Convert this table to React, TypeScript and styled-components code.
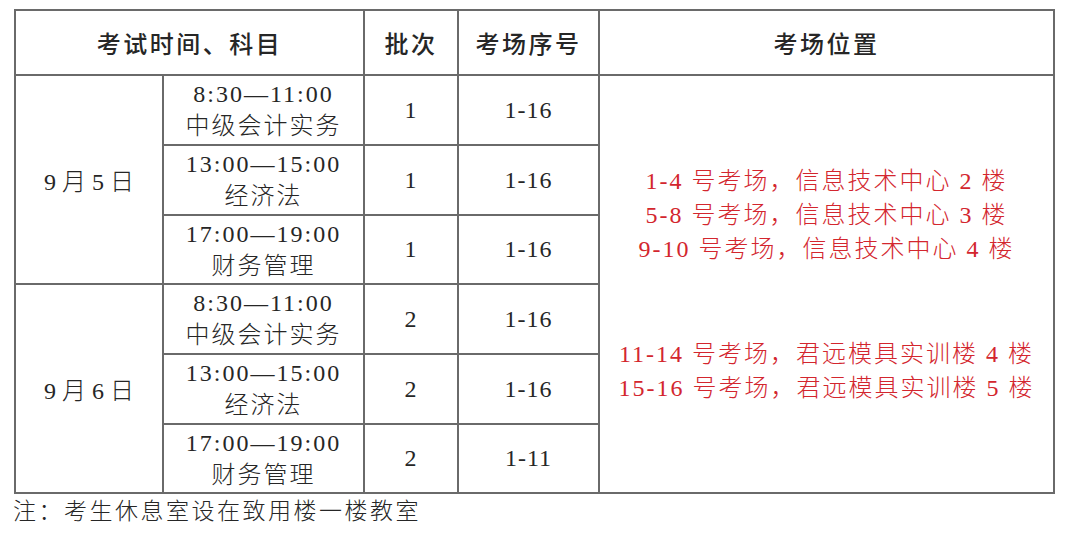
import React from 'react';
import styled, { createGlobalStyle } from 'styled-components';

const GlobalStyle = createGlobalStyle`
  html, body {
    margin: 0;
    padding: 0;
    background: #ffffff;
  }
`;

const Page = styled.div`
  padding: 9px 0 0 14px;
  font-family: "Liberation Serif", "Noto Sans CJK SC", serif;
  color: #262626;
`;

const Table = styled.table`
  border-collapse: collapse;
  table-layout: fixed;
  width: 1039px;
`;

const HeadCell = styled.th`
  border: 2px solid #6a6a6a;
  height: 63px;
  padding: 0;
  font-family: "Noto Sans CJK SC", sans-serif;
  font-weight: 500;
  font-size: 24px;
  letter-spacing: 2.5px;
  text-align: center;
  vertical-align: middle;
`;

const Cell = styled.td`
  border: 2px solid #6a6a6a;
  padding: 0;
  font-size: 24px;
  font-weight: 300;
  text-align: center;
  vertical-align: middle;
  letter-spacing: 1px;
`;

const DateCell = styled(Cell)`
  letter-spacing: 0;
  word-spacing: 0;
`;

const SubjectLine = styled.div`
  line-height: 32px;
  letter-spacing: 2px;
`;

const PlaceCell = styled(Cell)`
  color: #d3262e;
  line-height: 34px;
  letter-spacing: 2px;
`;

const PlaceLine = styled.div<{ $gapBefore?: boolean }>`
  margin-top: ${(p) => (p.$gapBefore ? '71px' : '0')};
`;

const Row = styled.tr<{ $h: number }>`
  height: ${(p) => p.$h}px;
`;

const Note = styled.div`
  font-size: 23px;
  font-weight: 300;
  letter-spacing: 2.5px;
  line-height: 36px;
  margin-left: -1px;
`;

interface Exam {
  time: string;
  subject: string;
  batch: string;
  seats: string;
  h: number;
}

const day1: Exam[] = [
  { time: '8:30—11:00', subject: '中级会计实务', batch: '1', seats: '1-16', h: 70 },
  { time: '13:00—15:00', subject: '经济法', batch: '1', seats: '1-16', h: 70 },
  { time: '17:00—19:00', subject: '财务管理', batch: '1', seats: '1-16', h: 69 },
];

const day2: Exam[] = [
  { time: '8:30—11:00', subject: '中级会计实务', batch: '2', seats: '1-16', h: 70 },
  { time: '13:00—15:00', subject: '经济法', batch: '2', seats: '1-16', h: 70 },
  { time: '17:00—19:00', subject: '财务管理', batch: '2', seats: '1-11', h: 69 },
];

const places = [
  '1-4 号考场，信息技术中心 2 楼',
  '5-8 号考场，信息技术中心 3 楼',
  '9-10 号考场，信息技术中心 4 楼',
  '11-14 号考场，君远模具实训楼 4 楼',
  '15-16 号考场，君远模具实训楼 5 楼',
];

const App = () => {
  return (
    <Page>
      <GlobalStyle />
      <Table>
        <colgroup>
          <col style={{ width: 148 }} />
          <col style={{ width: 201 }} />
          <col style={{ width: 94 }} />
          <col style={{ width: 141 }} />
          <col style={{ width: 455 }} />
        </colgroup>
        <thead>
          <tr>
            <HeadCell colSpan={2}>考试时间、科目</HeadCell>
            <HeadCell>批次</HeadCell>
            <HeadCell>考场序号</HeadCell>
            <HeadCell>考场位置</HeadCell>
          </tr>
        </thead>
        <tbody>
          {[day1, day2].map((day, d) =>
            day.map((ex, i) => (
              <Row $h={ex.h} key={`${d}-${i}`}>
                {i === 0 && <DateCell rowSpan={3}>9 月 {d === 0 ? 5 : 6} 日</DateCell>}
                <Cell>
                  <SubjectLine>{ex.time}</SubjectLine>
                  <SubjectLine>{ex.subject}</SubjectLine>
                </Cell>
                <Cell>{ex.batch}</Cell>
                <Cell>{ex.seats}</Cell>
                {d === 0 && i === 0 && (
                  <PlaceCell rowSpan={6}>
                    {places.map((p, k) => (
                      <PlaceLine key={k} $gapBefore={k === 3}>
                        {p}
                      </PlaceLine>
                    ))}
                  </PlaceCell>
                )}
              </Row>
            ))
          )}
        </tbody>
      </Table>
      <Note>注：考生休息室设在致用楼一楼教室</Note>
    </Page>
  );
};

export default App;
